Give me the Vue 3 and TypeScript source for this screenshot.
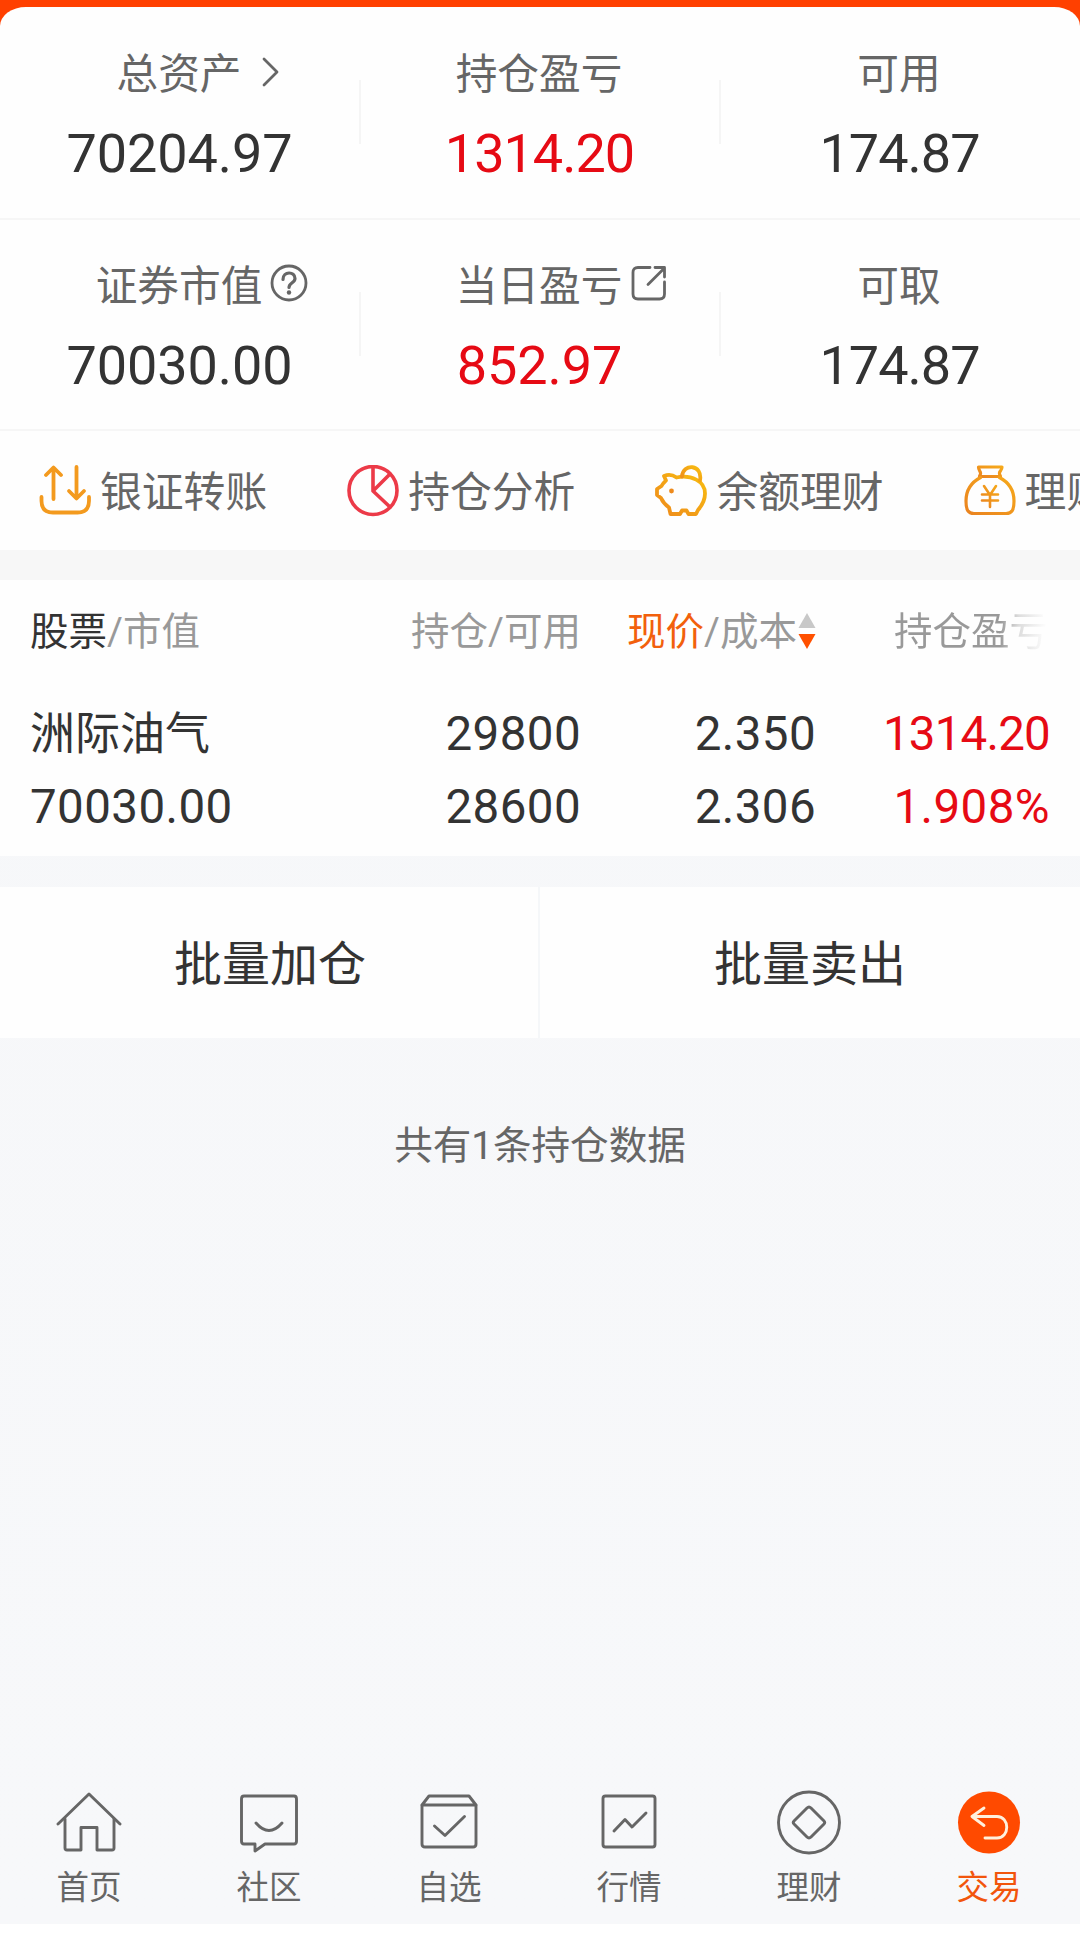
<script setup lang="ts">
interface Stat {
  label: string
  value: string
  red?: boolean
  tight?: boolean
  icon?: 'chevron' | 'help' | 'open'
}
interface Tab {
  key: string
  label: string
}

const summary: Stat[][] = [
  [
    { label: '总资产', value: '70204.97', icon: 'chevron' },
    { label: '持仓盈亏', value: '1314.20', red: true, tight: true },
    { label: '可用', value: '174.87', tight: true },
  ],
  [
    { label: '证券市值', value: '70030.00', icon: 'help' },
    { label: '当日盈亏', value: '852.97', red: true, icon: 'open' },
    { label: '可取', value: '174.87', tight: true },
  ],
]

const actions: Tab[] = [
  { key: 'transfer', label: '银证转账' },
  { key: 'pie', label: '持仓分析' },
  { key: 'pig', label: '余额理财' },
  { key: 'bag', label: '理财' },
]

const tabs: Tab[] = [
  { key: 'home', label: '首页' },
  { key: 'chat', label: '社区' },
  { key: 'pick', label: '自选' },
  { key: 'market', label: '行情' },
  { key: 'wealth', label: '理财' },
  { key: 'trade', label: '交易' },
]
</script>

<template>
  <div class="app">
    <section class="card">
      <div v-for="(row, r) in summary" :key="r" class="stats">
        <template v-for="(s, i) in row" :key="s.label">
          <i v-if="i > 0" class="sep"></i>
          <div class="stat">
            <div class="stat-label">
              <span>{{ s.label }}</span>
              <svg v-if="s.icon === 'chevron'" class="ic-chevron" width="18" height="30" viewBox="0 0 18 30">
                <path d="M2 2 L15 15 L2 28" />
              </svg>
              <svg v-else-if="s.icon === 'help'" class="ic-help" width="38" height="38" viewBox="0 0 38 38">
                <circle cx="19" cy="19" r="17" />
                <path d="M13 15.500 C13 7 25 7 25 14.500 C25 19 19 18.500 19 23.500" stroke-width="3.200" />
                <circle class="dot" cx="19" cy="28.500" r="2.200" />
              </svg>
              <svg v-else-if="s.icon === 'open'" class="ic-open" width="36" height="36" viewBox="0 0 36 36">
                <path d="M19 2.500 H7 Q2 2.500 2 7.500 V29 Q2 34 7 34 H28.500 Q33.500 34 33.500 29 V17" />
                <path d="M17 19.500 L33 3.500 M24 2.500 H33.500 V12" />
              </svg>
            </div>
            <div class="stat-value" :class="{ red: s.red, tight: s.tight }">{{ s.value }}</div>
          </div>
        </template>
      </div>

      <div class="actions">
        <div v-for="a in actions" :key="a.key" class="action">
          <svg v-if="a.key === 'transfer'" width="52" height="52" viewBox="0 0 52 52" stroke="#f39a1e">
            <path d="M14.500 34 V3 M7 10 L14.500 2.500 L22 10" />
            <path d="M37.500 2 V33 M30 26 L37.500 33.500 L45 26" />
            <path d="M2.500 32 V36 Q2.500 47.500 14 47.500 H38.500 Q50 47.500 50 36 V32" />
          </svg>
          <svg v-else-if="a.key === 'pie'" width="52" height="52" viewBox="0 0 52 52" stroke="#ec3a48">
            <circle cx="26" cy="25.500" r="24" stroke-width="3.600" />
            <path d="M26 2 V26 L43 42 M26 26 L43 9" stroke-width="3.600" />
          </svg>
          <svg v-else-if="a.key === 'pig'" width="52" height="52" viewBox="0 0 52 52">
            <defs>
              <linearGradient id="gold" x1="0" y1="1" x2="1" y2="0">
                <stop offset="0" stop-color="#ee8a1c" />
                <stop offset="1" stop-color="#f8bd10" />
              </linearGradient>
            </defs>
            <g stroke="url(#gold)">
              <path
                d="M9 11 C14 9 18 10 21.500 12.500 C36 9.500 50 16 50 28.500 C50 36 46.500 41 43 45 L41 49 H33.500 L31.500 45.500 H27 L25 49 H15.500 L14 42.500 C10 39.500 7.500 36.500 6 33 L2 30 V24 L6.500 21 C8 18 10 16.500 11 15.500 Z"
              />
              <path d="M27 11.500 C28 -2 48 -1 45 15.500" />
            </g>
            <circle cx="16.500" cy="26" r="2.400" fill="#ee8a1c" />
          </svg>
          <svg v-else width="52" height="52" viewBox="0 0 52 52">
            <defs>
              <linearGradient id="amber" x1="0" y1="1" x2="1" y2="0">
                <stop offset="0" stop-color="#ea8320" />
                <stop offset="1" stop-color="#f6a91a" />
              </linearGradient>
            </defs>
            <g stroke="url(#amber)" stroke-width="3.200">
              <path d="M14.500 2 H38 C38 5 36 6 35.500 7.500 C35 9 36 10 36.500 11.500 H15.500 C16 10 17 9 16.500 7.500 C16 6 14.500 5 14.500 2 Z" />
              <path
                d="M16.500 12.500 C6 18 2 27 2 36 C2 45 4 48.500 10 48.500 H42 C48 48.500 50 45 50 36 C50 27 46 18 35.500 12.500"
              />
              <path d="M20 21 L26 30 L32 21 M26 30 V42 M18 29.500 H34 M18 35.500 H34" stroke-width="2.600" />
            </g>
          </svg>
          <span>{{ a.label }}</span>
        </div>
      </div>
    </section>

    <section class="holdings">
      <div class="grid head">
        <div><b>股票</b>/市值</div>
        <div class="num">持仓/可用</div>
        <div class="num sortable">
          <span><b class="hot">现价</b>/成本</span>
          <svg width="18" height="38" viewBox="0 0 18 38">
            <path d="M9 1 L17.500 16 H0.500 Z" fill="#c8c8c8" />
            <path d="M9 37 L17.500 22 H0.500 Z" fill="#ff5000" />
          </svg>
        </div>
        <div class="clipped">持仓盈亏</div>
      </div>
      <div class="grid line first">
        <div class="name">洲际油气</div>
        <div class="num">29800</div>
        <div class="num">2.350</div>
        <div class="num red tight">1314.20</div>
      </div>
      <div class="grid line">
        <div>70030.00</div>
        <div class="num">28600</div>
        <div class="num">2.306</div>
        <div class="num red">1.908%</div>
      </div>
    </section>

    <section class="batch">
      <div class="batch-btn">批量加仓</div>
      <div class="batch-btn">批量卖出</div>
    </section>

    <p class="count">共有1条持仓数据</p>

    <nav class="tabs">
      <div v-for="t in tabs" :key="t.key" class="tab" :class="{ active: t.key === 'trade' }">
        <svg width="66" height="66" viewBox="0 0 66 66">
          <g v-if="t.key === 'home'">
            <path d="M2 34 L33 4 L64 34" />
            <path d="M9 29 V58 Q9 60 11 60 H25 V37.500 H41 V60 H56 Q58 60 58 58 V29" />
          </g>
          <g v-else-if="t.key === 'chat'">
            <path d="M8 6 H58 Q60.500 6 60.500 9 V51 Q60.500 54 58 54 H29 L19 61 V54 H8 Q5.500 54 5.500 51 V9 Q5.500 6 8 6 Z" />
            <path d="M20 33 Q33 48 46 33" />
          </g>
          <g v-else-if="t.key === 'pick'">
            <path d="M6 15.500 V54 Q6 57 9 57 H57 Q60 57 60 54 V15.500" />
            <path d="M6 15 L13 6 H53 L60 15 Z" />
            <path d="M18.500 36 L29 45.500 L48.500 26.500" />
          </g>
          <g v-else-if="t.key === 'market'">
            <rect x="7" y="6" width="52" height="51" rx="2.500" />
            <path d="M18 41 L29 29.500 L36 37 L50 23" />
          </g>
          <g v-else-if="t.key === 'wealth'">
            <circle cx="33" cy="32.500" r="30.500" />
            <path d="M31 18 Q33 16 35 18 L48 31 Q49.500 32.500 48 34 L35 47 Q33 49 31 47 L18 34 Q16.500 32.500 18 31 Z" />
          </g>
          <g v-else>
            <circle cx="33" cy="32.500" r="31" fill="#ff4a00" stroke="none" />
            <path d="M28 18 L16 26.500 L28 35.500 M16 26.500 H41 C54 26.500 54 48 41 48 H29" stroke="#fff0dc" />
          </g>
        </svg>
        <span>{{ t.label }}</span>
      </div>
    </nav>
  </div>
</template>

<style>
body {
  background: #fff;
}
</style>

<style scoped>
.app {
  width: 1080px;
  height: 1940px;
  overflow: hidden;
  display: flex;
  flex-direction: column;
  background: linear-gradient(#ff4000 0 40px, #f6f7f9 40px, #f7f8fa 1924px, #fff 1924px);
  font-family: Roboto, 'Noto Sans CJK SC', sans-serif;
  color: #333;
}
svg {
  display: block;
  flex: none;
  fill: none;
  stroke-linecap: round;
  stroke-linejoin: round;
}
.red {
  color: #e60a14;
}
.card {
  flex: none;
  margin-top: 7px;
  height: 543px;
  background: #fefefe;
  border-radius: 26px 26px 0 0 / 19px 19px 0 0;
}
.stats {
  display: flex;
  height: 211px;
  box-sizing: border-box;
  border-bottom: 2px solid #f6f6f6;
}
.stats:first-child {
  height: 213px;
  padding-top: 1px;
}
.sep {
  width: 2px;
  height: 64px;
  margin: 72px -1px 0;
  background: #f5f5f5;
}
.stat {
  flex: 1 1 0;
  padding-top: 43px;
}
.stat-label {
  display: flex;
  justify-content: center;
  font-size: 41.700px;
  line-height: 48px;
  color: #666;
}
.stat-label span {
  margin-left: -2px;
}
.stat-label svg {
  stroke: #666;
  stroke-width: 2.800;
}
.stat-label .dot {
  fill: #666;
  stroke: none;
}
.ic-chevron {
  margin: 6px -38px 0 20px;
}
.ic-help {
  margin: 1px -46px 0 8px;
}
.ic-open {
  margin: 2px -45px 0 9px;
}
.stat-value {
  margin-top: 23px;
  text-align: center;
  font-size: 54px;
  line-height: 64px;
}
.stat-value:not(.tight) {
  letter-spacing: -0.1px;
  margin-left: -1px;
}
.stat-value.tight {
  letter-spacing: -1px;
  text-indent: -1px;
}
.actions {
  display: flex;
  gap: 80px;
  height: 119px;
  align-items: center;
  padding-left: 39px;
  overflow: hidden;
}
.action {
  flex: none;
  display: flex;
  align-items: center;
  gap: 9px;
  font-size: 41.800px;
  line-height: 52px;
  color: #666;
}
.action span {
  margin-top: 4px;
}
.action svg {
  stroke-width: 3.800;
}
.holdings {
  flex: none;
  margin-top: 30px;
  height: 276px;
  background: #fefefe;
  box-shadow: 0 -30px #f7f7f7;
}
.grid {
  display: grid;
  grid-template-columns: 351px 200px 235px 234px;
  padding-left: 30px;
}
.num {
  text-align: right;
}
.head {
  padding-top: 26px;
  font-size: 38.500px;
  line-height: 52px;
  color: #999;
}
.head b {
  font-weight: 400;
  color: #333;
}
.head .hot {
  color: #f2600c;
}
.sortable {
  display: flex;
  justify-content: flex-end;
  align-items: center;
  gap: 1px;
}
.sortable span {
  flex: none;
}
.sortable svg {
  margin-top: -3px;
}
.clipped {
  justify-self: end;
  width: 156px;
  white-space: nowrap;
  overflow: hidden;
  background: linear-gradient(90deg, #999 0 68%, #ddd 80%, #fefefe 98%);
  -webkit-background-clip: text;
  background-clip: text;
  color: transparent;
}
.line {
  height: 73px;
  font-size: 47.500px;
  line-height: 73px;
  letter-spacing: 0.400px;
}
.line .tight {
  letter-spacing: -0.800px;
}
.first {
  margin-top: 40px;
}
.name {
  font-size: 45px;
  letter-spacing: 0;
}
.batch {
  flex: none;
  display: flex;
  margin-top: 31px;
  height: 151px;
  background: #fefefe;
}
.batch-btn {
  flex: 1;
  text-align: center;
  font-size: 48px;
  line-height: 156px;
}
.batch-btn + .batch-btn {
  border-left: 2px solid #f5f7f9;
  margin-left: -2px;
}
.count {
  margin: 82px 0 0;
  text-align: center;
  font-size: 38.600px;
  line-height: 52px;
  color: #666;
}
.tabs {
  display: flex;
  margin: auto 1px 0 -1px;
  height: 154px;
}
.tab {
  flex: 1;
  display: flex;
  flex-direction: column;
  align-items: center;
  font-size: 32.500px;
  line-height: 40px;
  color: #666;
}
.tab svg {
  margin-top: 4px;
  stroke: #666;
  stroke-width: 2.900;
}
.tab span {
  margin-top: 12px;
}
.tab.active {
  color: #f2550c;
}
</style>
